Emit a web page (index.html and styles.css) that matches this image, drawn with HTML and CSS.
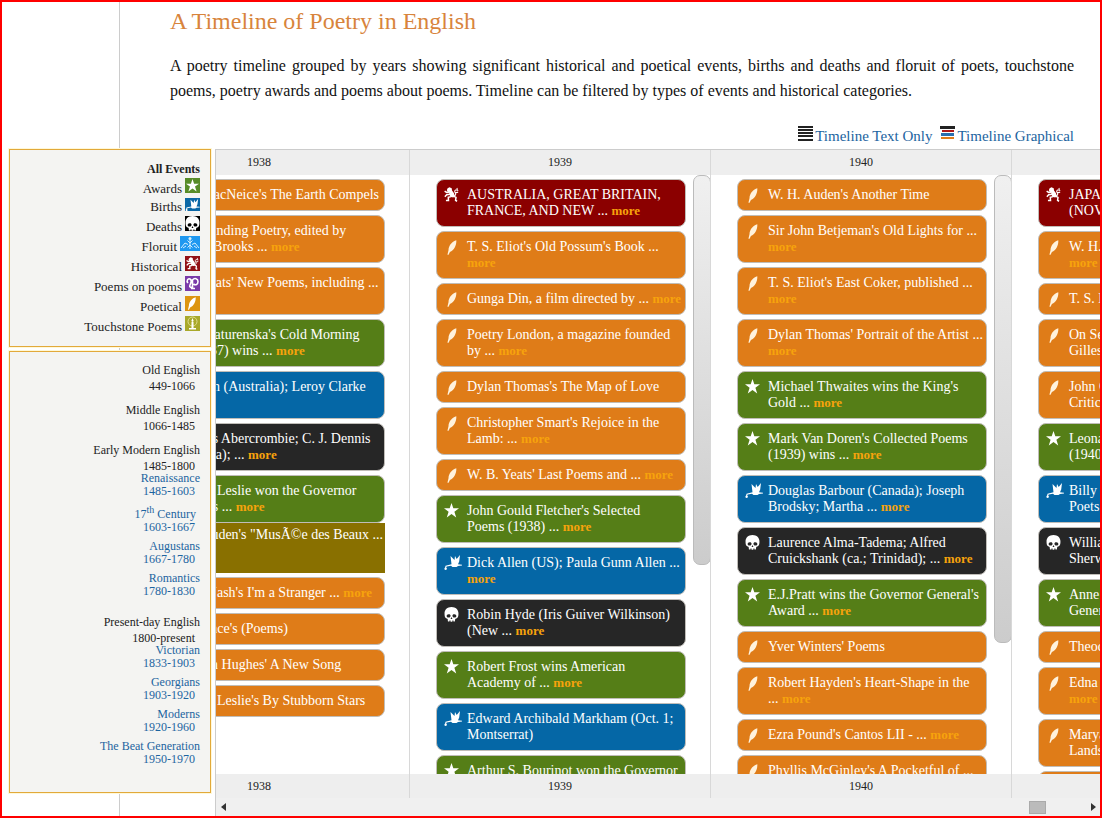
FILE: index.html
```html
<!DOCTYPE html>
<html lang="en">
<head>
<meta charset="utf-8">
<title>A Timeline of Poetry in English</title>
<link rel="stylesheet" href="styles.css">
</head>
<body>
<svg class="defs" aria-hidden="true">
  <symbol id="star" viewBox="0 0 14 14"><path d="M7 0l1.700 5H14L9.700 8.200l1.700 5.300L7 10.300l-4.400 3.200 1.700-5.300L0 5h5.300z"/></symbol>
  <symbol id="quill" viewBox="0 0 14 14"><path d="M11.500.3C8 1 4.300 5 4.200 9.500L3.200 13.800h1.100l1.200-2.600C9.300 10 11.800 5 11.500.3z"/></symbol>
  <symbol id="stork" viewBox="0 0 18 15"><path d="M6.500 1l4 4 .5-4 1.700 3L16 0l-.8 6.500L14 9.300l4 .4v.9l-4 .3-1.500 1H8.500L7 10.700l-4.300.8-.5 1 .6.800c.3 1-.3 1.700-1.200 1.700S.2 14.300.5 13.300l.7-1 .3-1.600 6-1.400z"/></symbol>
  <symbol id="skull" viewBox="0 0 14 14"><path fill-rule="evenodd" d="M7 0C3 0 .5 2.600.5 6c0 1.700.2 3 .9 4 .7.8 1.800.6 2 1.200l.3 2.300h1.400v-1h1v1.300h1.700v-1.300h1v1h1.300l.4-2.300c.2-.6 1.400-.4 2-1.200.8-1 1-2.300 1-4C13.500 2.600 11 0 7 0zM4.200 6.700c1.200-.2 2 .5 1.900 1.500 0 1.200-.8 1.700-1.800 1.700S2.400 9.400 2.500 8.300c0-1 .7-1.500 1.700-1.600zm5.600 0c1 .1 1.700.6 1.700 1.600.1 1.100-.8 1.600-1.800 1.600s-1.800-.5-1.800-1.700c-.1-1 .7-1.700 1.900-1.500zM7 9.300l.9 1.900H6.100z"/></symbol>
  <symbol id="lion" viewBox="0 0 14 14"><path d="M3.200 1.500L5 .3l2.200.9.3 2 1.700 2.300.8 2.700-1.200 1.600-2.500-.5-1.500-2.500L5 5 3.200 4.300 2.700 3z"/><path fill="none" stroke="#fff" stroke-width="1.400" d="M5.500 4.700L2.500 5 .6 3.800M5.500 6.700L2.500 7.200.8 9M6.500 9L4 9.700l.2 2.800H1.800M9 8.500l2.200 1.200-.4 2.800 1.400.8"/><path fill="none" stroke="#fff" stroke-width="1" d="M9.500 8c2 0 1.500-2 .8-3s0-2.500 1-2.200 1.500-.5.700-1.800M10.500 5.500l2.700-.7M11.500 2.800l1.800.4"/></symbol>
</svg>

<header class="intro">
  <h1 class="title">A Timeline of Poetry in English</h1>
  <p class="lead">A poetry timeline grouped by years showing significant historical and poetical events, births and deaths and floruit of poets, touchstone poems, poetry awards and poems about poems. Timeline can be filtered by types of events and historical categories.</p>
  <nav class="views">
    <a href="#text"><svg class="view-icon" viewBox="0 0 15 15"><path fill="#222" d="M0 0h15v2H0zM0 3h15v2H0zM0 6h15v2H0zM0 9h15v2H0zM0 13h15v2H0z"/></svg>Timeline Text Only</a>
    <a href="#graphical"><svg class="view-icon" viewBox="0 0 15 15"><path fill="#222" d="M0 0h15v3H0z"/><path fill="#b01818" d="M2 4h12v2H2z"/><path fill="#2a6fae" d="M1 7h13v3H1z"/><path fill="#e07c18" d="M1 11h13v2H1z"/></svg>Timeline Graphical</a>
  </nav>
</header>

<main class="main">
  <aside class="sidebar">
    <nav class="panel legend">
      <a class="row strong" href="#all">All Events</a>
      <a class="row" href="#awards">Awards<svg class="key" viewBox="0 0 15 15"><rect width="15" height="15" fill="#578c28"/><use href="#star" x="1" y="1" width="13" height="13" fill="#fff"/></svg></a>
      <a class="row short" href="#births">Births<svg class="key low" viewBox="0 0 15 13"><rect width="15" height="13" fill="#0b67a6"/><use href="#stork" x="0" y="1" width="15" height="12" fill="#fff"/></svg></a>
      <a class="row" href="#deaths">Deaths<svg class="key" viewBox="0 0 15 15"><rect width="15" height="15" fill="#000"/><use href="#skull" x="0" y="0" width="15" height="15" fill="#fff"/></svg></a>
      <a class="row" href="#floruit">Floruit<svg class="key wide" viewBox="0 0 20 15"><rect width="20" height="15" fill="#1e98f0"/><g fill="none" stroke="#d4efff"><path d="M10 2v11M7.500 4.500L10 7l2.500-2.500M7.500 11.500L10 9l2.500 2.500"/><path d="M1 12l4-5 3 1.500M19 12l-4-5-3 1.500M3 12l3-2M17 12l-3-2"/></g><circle cx="10" cy="2.500" r="1.500" fill="#d4efff"/></svg></a>
      <a class="row" href="#historical">Historical<svg class="key" viewBox="0 0 15 15"><rect width="15" height="15" fill="#921015"/><use href="#lion" x="1" y="1" width="13" height="13" fill="#fff"/></svg></a>
      <a class="row" href="#poems">Poems on poems<svg class="key" viewBox="0 0 15 15"><rect width="15" height="15" fill="#7a3aa8"/><path fill="none" stroke="#fff" stroke-width="1.600" d="M3 7C1 5 3 2 5 3s1 4 0 6 1 3 2 2M7.500 12V3.500M7.500 4c2-2.500 5.500-1.500 5.500 1.500S10.500 9.500 8.500 8M6 12.500h4"/></svg></a>
      <a class="row" href="#poetical">Poetical<svg class="key" viewBox="0 0 15 15"><rect width="15" height="15" fill="#dd9510"/><use href="#quill" x="0" y="1" width="13" height="13" fill="#fff"/></svg></a>
      <a class="row" href="#touchstone">Touchstone Poems<svg class="key" viewBox="0 0 15 15"><rect width="15" height="15" fill="#a9a92a"/><circle cx="7.500" cy="5.500" r="4.500" fill="none" stroke="#dedc8c"/><path fill="#fff" d="M7.500 2l1.200 3-1.200 1-1.200-1zM6.500 6h2v6h-2zM4 12h7v1.500H4z"/></svg></a>
    </nav>
    <nav class="panel periods">
      <section class="era"><a href="#old">Old English</a><span class="years">449-1066</span></section>
      <section class="era"><a href="#middle">Middle English</a><span class="years">1066-1485</span></section>
      <section class="era"><a href="#early">Early Modern English</a><span class="years">1485-1800</span>
        <div class="subs">
          <a class="sub" href="#renaissance">Renaissance<span class="years">1485-1603</span></a>
          <a class="sub century" href="#c17"><span class="name">17<sup>th</sup> Century</span><span class="years">1603-1667</span></a>
          <a class="sub" href="#augustans">Augustans<span class="years">1667-1780</span></a>
          <a class="sub" href="#romantics">Romantics<span class="years">1780-1830</span></a>
        </div>
      </section>
      <section class="era late"><a href="#present">Present-day English</a><span class="years">1800-present</span>
        <div class="subs">
          <a class="sub" href="#victorian">Victorian<span class="years">1833-1903</span></a>
          <a class="sub" href="#georgians">Georgians<span class="years">1903-1920</span></a>
          <a class="sub" href="#moderns">Moderns<span class="years">1920-1960</span></a>
          <a class="sub" href="#beat">The Beat Generation<span class="years">1950-1970</span></a>
        </div>
      </section>
    </nav>
  </aside>

  <section class="timeline">
    <div class="viewport">
      <div class="track">
        <section class="year">
          <h2 class="label">1938</h2>
          <div class="events"><div class="list">
            <article class="card poetical"><svg class="icon"><use href="#quill"/></svg><p>Louis MacNeice's The Earth Compels</p></article>
            <article class="card poetical"><svg class="icon"><use href="#quill"/></svg><p>Understanding Poetry, edited by<br>Cleanth Brooks ... <a href="#m">more</a></p></article>
            <article class="card poetical"><svg class="icon"><use href="#quill"/></svg><p>W. B. Yeats' New Poems, including ...<br><a href="#m">more</a></p></article>
            <article class="card award"><svg class="icon"><use href="#star"/></svg><p>Marya Zaturenska's Cold Morning<br>Sky (1937) wins ... <a href="#m">more</a></p></article>
            <article class="card birth"><svg class="icon stork"><use href="#stork"/></svg><p>Les Allen (Australia); Leroy Clarke<br>(Tr.)</p></article>
            <article class="card death"><svg class="icon"><use href="#skull"/></svg><p>Lascelles Abercrombie; C. J. Dennis<br>(Australia); ... <a href="#m">more</a></p></article>
            <article class="card award last"><svg class="icon"><use href="#star"/></svg><p>Kenneth Leslie won the Governor<br>General's ... <a href="#m">more</a></p></article>
            <article class="card touchstone"><p>W. H. Auden's "MusÃ©e des Beaux ...<br><a href="#m">more</a></p></article>
            <article class="card poetical"><svg class="icon"><use href="#quill"/></svg><p>Ogden Nash's I'm a Stranger ... <a href="#m">more</a></p></article>
            <article class="card poetical"><svg class="icon"><use href="#quill"/></svg><p>F. T. Prince's (Poems)</p></article>
            <article class="card poetical"><svg class="icon"><use href="#quill"/></svg><p>Langston Hughes' A New Song</p></article>
            <article class="card poetical"><svg class="icon"><use href="#quill"/></svg><p>Kenneth Leslie's By Stubborn Stars</p></article>
          </div></div>
          <div class="label foot">1938</div>
        </section>
        <section class="year">
          <h2 class="label">1939</h2>
          <div class="events"><div class="list">
            <article class="card historical"><svg class="icon"><use href="#lion"/></svg><p>AUSTRALIA, GREAT BRITAIN,<br>FRANCE, AND NEW ... <a href="#m">more</a></p></article>
            <article class="card poetical"><svg class="icon"><use href="#quill"/></svg><p>T. S. Eliot's Old Possum's Book ...<br><a href="#m">more</a></p></article>
            <article class="card poetical"><svg class="icon"><use href="#quill"/></svg><p>Gunga Din, a film directed by ... <a href="#m">more</a></p></article>
            <article class="card poetical"><svg class="icon"><use href="#quill"/></svg><p>Poetry London, a magazine founded<br>by ... <a href="#m">more</a></p></article>
            <article class="card poetical"><svg class="icon"><use href="#quill"/></svg><p>Dylan Thomas's The Map of Love</p></article>
            <article class="card poetical"><svg class="icon"><use href="#quill"/></svg><p>Christopher Smart's Rejoice in the<br>Lamb: ... <a href="#m">more</a></p></article>
            <article class="card poetical"><svg class="icon"><use href="#quill"/></svg><p>W. B. Yeats' Last Poems and ... <a href="#m">more</a></p></article>
            <article class="card award"><svg class="icon"><use href="#star"/></svg><p>John Gould Fletcher's Selected<br>Poems (1938) ... <a href="#m">more</a></p></article>
            <article class="card birth"><svg class="icon stork"><use href="#stork"/></svg><p>Dick Allen (US); Paula Gunn Allen ...<br><a href="#m">more</a></p></article>
            <article class="card death"><svg class="icon"><use href="#skull"/></svg><p>Robin Hyde (Iris Guiver Wilkinson)<br>(New ... <a href="#m">more</a></p></article>
            <article class="card award"><svg class="icon"><use href="#star"/></svg><p>Robert Frost wins American<br>Academy of ... <a href="#m">more</a></p></article>
            <article class="card birth"><svg class="icon stork"><use href="#stork"/></svg><p>Edward Archibald Markham (Oct. 1;<br>Montserrat)</p></article>
            <article class="card award"><svg class="icon"><use href="#star"/></svg><p>Arthur S. Bourinot won the Governor<br>General's ... <a href="#m">more</a></p></article>
          </div><div class="thumb mid"></div></div>
          <div class="label foot">1939</div>
        </section>
        <section class="year">
          <h2 class="label">1940</h2>
          <div class="events"><div class="list">
            <article class="card poetical"><svg class="icon"><use href="#quill"/></svg><p>W. H. Auden's Another Time</p></article>
            <article class="card poetical"><svg class="icon"><use href="#quill"/></svg><p>Sir John Betjeman's Old Lights for ...<br><a href="#m">more</a></p></article>
            <article class="card poetical"><svg class="icon"><use href="#quill"/></svg><p>T. S. Eliot's East Coker, published ...<br><a href="#m">more</a></p></article>
            <article class="card poetical"><svg class="icon"><use href="#quill"/></svg><p>Dylan Thomas' Portrait of the Artist ...<br><a href="#m">more</a></p></article>
            <article class="card award"><svg class="icon"><use href="#star"/></svg><p>Michael Thwaites wins the King's<br>Gold ... <a href="#m">more</a></p></article>
            <article class="card award"><svg class="icon"><use href="#star"/></svg><p>Mark Van Doren's Collected Poems<br>(1939) wins ... <a href="#m">more</a></p></article>
            <article class="card birth"><svg class="icon stork"><use href="#stork"/></svg><p>Douglas Barbour (Canada); Joseph<br>Brodsky; Martha ... <a href="#m">more</a></p></article>
            <article class="card death"><svg class="icon"><use href="#skull"/></svg><p>Laurence Alma-Tadema; Alfred<br>Cruickshank (ca.; Trinidad); ... <a href="#m">more</a></p></article>
            <article class="card award"><svg class="icon"><use href="#star"/></svg><p>E.J.Pratt wins the Governor General's<br>Award ... <a href="#m">more</a></p></article>
            <article class="card poetical"><svg class="icon"><use href="#quill"/></svg><p>Yver Winters' Poems</p></article>
            <article class="card poetical"><svg class="icon"><use href="#quill"/></svg><p>Robert Hayden's Heart-Shape in the<br>... <a href="#m">more</a></p></article>
            <article class="card poetical"><svg class="icon"><use href="#quill"/></svg><p>Ezra Pound's Cantos LII - ... <a href="#m">more</a></p></article>
            <article class="card poetical"><svg class="icon"><use href="#quill"/></svg><p>Phyllis McGinley's A Pocketful of ...<br><a href="#m">more</a></p></article>
          </div><div class="thumb tall"></div></div>
          <div class="label foot">1940</div>
        </section>
        <section class="year">
          <h2 class="label">1941</h2>
          <div class="events"><div class="list">
            <article class="card historical"><svg class="icon"><use href="#lion"/></svg><p>JAPAN<br>(NOV ... <a href="#m">more</a></p></article>
            <article class="card poetical"><svg class="icon"><use href="#quill"/></svg><p>W. H. Auden's ...<br><a href="#m">more</a></p></article>
            <article class="card poetical"><svg class="icon"><use href="#quill"/></svg><p>T. S. Eliot's The Dry Salvages</p></article>
            <article class="card poetical"><svg class="icon"><use href="#quill"/></svg><p>On September 3<br>Gillespie ... <a href="#m">more</a></p></article>
            <article class="card poetical"><svg class="icon"><use href="#quill"/></svg><p>John Crowe Ransom's The New<br>Criticism</p></article>
            <article class="card award"><svg class="icon"><use href="#star"/></svg><p>Leonard Bacon's Sunderland<br>(1940) wins ... <a href="#m">more</a></p></article>
            <article class="card birth"><svg class="icon stork"><use href="#stork"/></svg><p>Billy Collins, US<br>Poets ... <a href="#m">more</a></p></article>
            <article class="card death"><svg class="icon"><use href="#skull"/></svg><p>William Arthur Deacon<br>Sherwood ... <a href="#m">more</a></p></article>
            <article class="card award"><svg class="icon"><use href="#star"/></svg><p>Anne Marriott won the Governor<br>General's ... <a href="#m">more</a></p></article>
            <article class="card poetical"><svg class="icon"><use href="#quill"/></svg><p>Theodore Roethke's Open House</p></article>
            <article class="card poetical"><svg class="icon"><use href="#quill"/></svg><p>Edna St. Vincent Millay's ...<br><a href="#m">more</a></p></article>
            <article class="card poetical"><svg class="icon"><use href="#quill"/></svg><p>Marya Zaturenska's The Listening<br>Landscape</p></article>
            <article class="card poetical"><svg class="icon"><use href="#quill"/></svg><p>Louis Zukofsky's 55 Poems</p></article>
          </div></div>
          <div class="label foot">1941</div>
        </section>
      </div>
    </div>
    <div class="hscroll">
      <button class="arrow" aria-label="Scroll left"><svg viewBox="0 0 5 8"><path d="M5 0v8L0 4z"/></svg></button>
      <div class="grip"></div>
      <button class="arrow" aria-label="Scroll right"><svg viewBox="0 0 5 8"><path d="M0 0v8l5-4z"/></svg></button>
    </div>
  </section>
</main>
</body>
</html>
```

FILE: styles.css
```css
* { box-sizing: border-box; }

body {
  margin: 0;
  height: 100vh;
  display: flex;
  flex-direction: column;
  overflow: hidden;
  border: 2px solid #f00;
  background: linear-gradient(#ccc, #ccc) 119px 0 / 1px 100% no-repeat #fff;
  color: #222;
  font-family: "Palatino Linotype", "Book Antiqua", Palatino, "Liberation Serif", serif;
  font-size: 14px;
  line-height: 16px;
}

a { color: inherit; text-decoration: none; }
.defs { position: absolute; width: 0; height: 0; }

.intro { padding: 3px 26px 0 168px; }
.title { margin: 0 0 16px; font-size: 24px; line-height: 32px; font-weight: 400; color: #d8843c; }
.lead { margin: 0; font-size: 16px; line-height: 25px; text-align: justify; color: #111; }
.views {
  display: flex;
  justify-content: flex-end;
  gap: 8px;
  padding: 23px 0 3px;
  font-size: 15px;
  line-height: 20px;
  color: #1c64a0;
}
.view-icon { width: 15px; height: 15px; margin-right: 2px; }

.main { flex: 1; min-height: 0; display: flex; gap: 4px; padding-left: 7px; }

.sidebar { width: 202px; flex: none; display: flex; flex-direction: column; gap: 4px; font-size: 13px; text-align: right; }
.panel { border: 1px solid #e2a93a; background: #f4f4f2; box-shadow: 0 0 0 1px #fff8d8; padding: 8px 10px; }
.row { display: flex; justify-content: flex-end; align-items: baseline; gap: 3px; height: 20px; line-height: 16px; }
.short { height: 18px; }
.strong { font-weight: 700; font-size: 12px; line-height: 22px; }
.key { width: 15px; height: 15px; flex: none; }
.low { height: 13px; }
.wide { width: 20px; }
.legend { padding-bottom: 10px; }

.periods { padding: 10px 10px 26px; font-size: 12px; }
.era { margin-bottom: 8px; }
.era a, .years, .name { display: block; }
.years { padding-right: 5px; }
.subs { display: flex; flex-direction: column; gap: 6px; margin-top: -2px; line-height: 13px; color: #1c64a0; }
.name { padding-right: 4px; }
.century { padding-top: 4px; }
.name sup { font-size: 10px; line-height: 0; }
.late { margin-top: 16px; margin-bottom: 0; }

.timeline { flex: 1; min-width: 0; display: flex; flex-direction: column; border: solid #ccc; border-width: 1px 0 0 1px; }
.viewport { flex: 1; min-height: 0; overflow: hidden; }
.track { display: flex; height: 100%; margin-left: -107px; }
.year { width: 301px; flex: none; display: flex; flex-direction: column; border-right: 1px solid #d8d8d8; }
.label { margin: 0; background: #eee; text-align: center; font-size: 12px; line-height: 25px; font-weight: 400; }
.foot { line-height: 24px; }
.events { flex: 1; min-height: 0; overflow: hidden; display: flex; gap: 7px; padding-left: 26px; }
.list { width: 250px; padding-top: 4px; }

.card {
  display: flex;
  margin-bottom: 4px;
  padding: 7px 0 7px 7px;
  border: 1px solid #c0bdb8;
  border-radius: 8px;
  color: #fff;
  white-space: nowrap;
}
.card p { margin: 0; }
.card a { font-size: 13px; font-weight: 700; color: #f7a30c; }
.icon { width: 15px; height: 15px; flex: none; margin: 0 8px 0 0; fill: #fff; }
.stork { width: 18px; margin-right: 5px; }
.poetical { background: #df7c18; }
.poetical .icon { fill: #fff2dc; margin-top: 1px; }
.award { background: #557e17; }
.birth { background: #0567a6; }
.death { background: #262626; }
.historical { background: #8b0000; }
.last { margin-bottom: 0; }
.touchstone { height: 50px; padding: 4px 0 0 31px; border: 0; border-radius: 0; background: #897000; }

.thumb { width: 18px; margin-right: -1px; border: 1px solid #bbb; border-radius: 7px; background: linear-gradient(#f0f0f0, #ccc); }
.mid { height: 390px; }
.tall { height: 468px; }

.hscroll { display: flex; align-items: center; height: 18px; background: #f0f0f0; }
.arrow { width: 14px; height: 18px; padding: 0; border: 0; background: none; display: flex; align-items: center; justify-content: center; fill: #333; }
.arrow svg { width: 5px; height: 8px; }
.grip { width: 17px; height: 13px; margin: 0 40px 0 auto; border: 1px solid #aaa; background: #bbb; }
```
